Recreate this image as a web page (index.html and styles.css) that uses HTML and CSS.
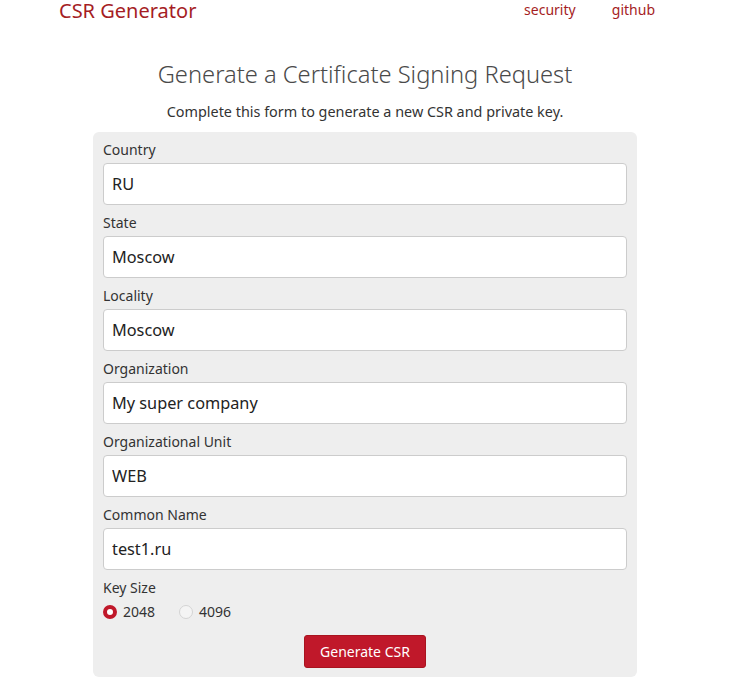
FILE: index.html
```html
<!DOCTYPE html>
<html lang="en">
<head>
  <meta charset="UTF-8">
  <title>CSR Generator</title>
  <link rel="stylesheet" href="styles.css">
</head>
<body>

<div class="page">
  <div class="topbar">
    <a class="brand" href="#">CSR Generator</a>
    <nav class="links">
      <a href="#">security</a>
      <a href="#">github</a>
    </nav>
  </div>

  <h1>Generate a Certificate Signing Request</h1>
  <p class="lead">Complete this form to generate a new CSR and private key.</p>

  <form class="csr-form" onsubmit="return false">
    <label class="field">
      <span>Country</span>
      <input type="text" value="RU">
    </label>
    <label class="field">
      <span>State</span>
      <input type="text" value="Moscow">
    </label>
    <label class="field">
      <span>Locality</span>
      <input type="text" value="Moscow">
    </label>
    <label class="field">
      <span>Organization</span>
      <input type="text" value="My super company">
    </label>
    <label class="field">
      <span>Organizational Unit</span>
      <input type="text" value="WEB">
    </label>
    <label class="field">
      <span>Common Name</span>
      <input type="text" value="test1.ru">
    </label>

    <div class="keysize">
      <span>Key Size</span>
      <div class="radios">
        <label><input type="radio" name="bits" checked> 2048</label>
        <label><input type="radio" name="bits"> 4096</label>
      </div>
    </div>

    <div class="actions">
      <button type="submit">Generate CSR</button>
    </div>
  </form>
</div>

</body>
</html>
```

FILE: styles.css
```css
body {
  margin: 0;
  font-family: "Noto Sans", "Open Sans", sans-serif;
  color: #333;
  background: #fff;
}
.page {
  width: 730px;
}
.topbar {
  display: flex;
  justify-content: space-between;
  align-items: flex-start;
  padding: 0 75px 0 59px;
  height: 28px;
}
.brand {
  color: #a51d24;
  text-decoration: none;
  font-size: 20px;
  line-height: 24px;
  margin-top: -1px;
}
.links {
  margin-top: -2px;
}
.links a {
  color: #a51d24;
  text-decoration: none;
  font-size: 14px;
  line-height: 20px;
  margin-left: 32px;
}
h1 {
  margin: 30px 0 0;
  text-align: center;
  font-weight: 300;
  font-size: 23.7px;
  color: #4a4a4a;
  line-height: 32px;
}
.lead {
  margin: 12px 0 10px;
  text-align: center;
  font-size: 14.4px;
  line-height: 20px;
}
.csr-form {
  width: 524px;
  margin-left: 93px;
  background: #eee;
  border-radius: 6px;
  padding: 7px 10px 9px;
}
.field {
  display: block;
  margin-bottom: 7px;
}
.field span, .keysize > span {
  display: block;
  font-size: 14px;
  line-height: 22px;
  margin-bottom: 2px;
}
.field input {
  box-sizing: border-box;
  width: 100%;
  height: 42px;
  border: 1px solid #ccc;
  border-radius: 4px;
  padding: 0 8px;
  font-family: inherit;
  font-size: 16.3px;
  color: #222;
  background: #fff;
}
.radios {
  display: flex;
  gap: 24px;
  font-size: 14px;
  line-height: 22px;
}
.radios label {
  display: flex;
  align-items: center;
  gap: 6px;
}
.radios input {
  appearance: none;
  -webkit-appearance: none;
  margin: 0;
  width: 14px;
  height: 14px;
  border-radius: 50%;
  border: 1px solid #d4d4d4;
  background: #f4f4f4;
  box-sizing: border-box;
}
.radios input:checked {
  border: 4.5px solid #c0182a;
  background: #fff;
}
.actions {
  text-align: center;
  margin-top: 12px;
}
.actions button {
  background: #c0182a;
  color: #fff;
  border: 1px solid #a8141f;
  border-radius: 3px;
  font-family: inherit;
  font-size: 14px;
  padding: 0 15px;
  height: 33px;
}
```
